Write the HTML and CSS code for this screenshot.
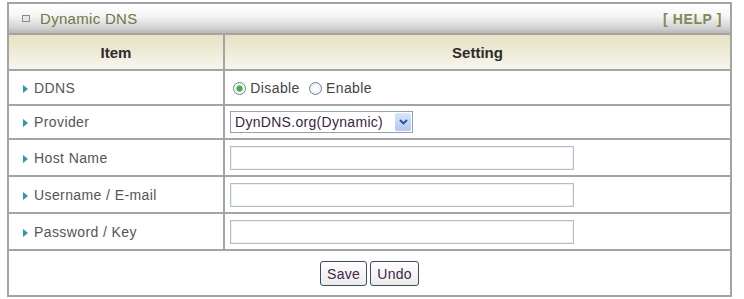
FILE: index.html
```html
<!DOCTYPE html>
<html lang="en">
<head>
    <meta charset="UTF-8">
    <title>Dynamic DNS</title>
    <link rel="stylesheet" href="styles.css">
</head>
<body>
    <table class="panel">
        <tr>
            <td colspan="2" class="title-bar">
                <div class="title-row">
                    <span class="title"><span class="title-icon"></span>Dynamic DNS</span>
                    <span class="help">[ HELP ]</span>
                </div>
            </td>
        </tr>
        <tr class="head">
            <th class="col-item">Item</th>
            <th>Setting</th>
        </tr>
        <tr class="row-ddns">
            <td class="label"><span class="bullet"></span>DDNS</td>
            <td class="value">
                <label class="radio"><input type="radio" name="ddns" checked> Disable</label>
                <label class="radio"><input type="radio" name="ddns"> Enable</label>
            </td>
        </tr>
        <tr class="row-provider">
            <td class="label"><span class="bullet"></span>Provider</td>
            <td class="value">
                <span class="select-wrap">
                    <select class="select">
                        <option>DynDNS.org(Dynamic)</option>
                        <option>DynDNS.org(Custom)</option>
                        <option>TZO.com</option>
                    </select>
                    <span class="select-arrow">
                        <svg width="9" height="6" viewBox="0 0 9 6"><path d="M1 1 L4.5 4.5 L8 1" fill="none" stroke="#2a4fa0" stroke-width="1.8"/></svg>
                    </span>
                </span>
            </td>
        </tr>
        <tr class="row-field">
            <td class="label"><span class="bullet"></span>Host Name</td>
            <td class="value"><input type="text" class="text-input"></td>
        </tr>
        <tr class="row-field">
            <td class="label"><span class="bullet"></span>Username / E-mail</td>
            <td class="value"><input type="text" class="text-input"></td>
        </tr>
        <tr class="row-field">
            <td class="label"><span class="bullet"></span>Password / Key</td>
            <td class="value"><input type="password" class="text-input"></td>
        </tr>
        <tr class="row-buttons">
            <td colspan="2">
                <div class="buttons">
                    <button class="btn">Save</button>
                    <button class="btn">Undo</button>
                </div>
            </td>
        </tr>
    </table>
</body>
</html>
```

FILE: styles.css
```css
body {
    margin: 0;
    padding: 2px 0 0 7px;
    background: #ffffff;
    font-family: "Liberation Sans", Arial, sans-serif;
    font-size: 14px;
}
.panel {
    width: 725px;
    border-collapse: collapse;
    border: 2px solid #a4a4a4;
}
.panel td,
.panel th {
    border: 2px solid #a4a4a4;
    padding: 0;
}
.title-bar {
    height: 29px;
    background: linear-gradient(#ffffff 0%, #f6f6f6 40%, #d4d4d4 80%, #b8b8b8 100%);
}
.title-row {
    display: flex;
    justify-content: space-between;
    align-items: center;
    padding: 0 8px 0 13px;
    color: #6d7a40;
    font-size: 15px;
    letter-spacing: 0.3px;
}
.title {
    display: flex;
    align-items: center;
}
.title-icon {
    display: inline-block;
    width: 6px;
    height: 5px;
    border: 1px solid #8c8c8c;
    background: #e4e4e4;
    margin-right: 10px;
}
.help {
    color: #7e8b56;
    font-size: 14px;
    font-weight: bold;
    letter-spacing: 0.6px;
}
.head th {
    height: 34px;
    background: linear-gradient(#e6e2c4 0%, #eeebd6 50%, #f7f6ee 100%);
    color: #2c2c2c;
    font-size: 15px;
    font-weight: bold;
    text-align: center;
}
.col-item {
    width: 214px;
}
.label {
    color: #555555;
    letter-spacing: 0.4px;
    padding-left: 14px !important;
}
.bullet {
    display: inline-block;
    width: 0;
    height: 0;
    border-top: 4px solid transparent;
    border-bottom: 4px solid transparent;
    border-left: 5px solid #2e9aa2;
    margin-right: 6px;
    vertical-align: 0;
}
.value {
    padding-left: 5px !important;
}
.row-ddns td {
    height: 33px;
}
.row-provider td {
    height: 32px;
}
.row-field td {
    height: 35px;
}
.row-buttons td {
    height: 44px;
}
.radio {
    color: #444444;
    font-size: 14px;
    letter-spacing: 0.4px;
    margin-right: 2px;
}
.radio input {
    appearance: none;
    width: 13px;
    height: 13px;
    margin: 0 0 0 3px;
    border: 1px solid #6c7f9a;
    border-radius: 50%;
    background: radial-gradient(#ffffff, #e6e9ee);
    vertical-align: -2px;
}
.radio input:checked {
    background: radial-gradient(#3cb040 0, #46b04a 2.6px, #d8ecd6 3.4px, #ffffff 5px);
}
.select-wrap {
    position: relative;
    display: inline-block;
    vertical-align: middle;
}
.select {
    appearance: none;
    width: 183px;
    height: 22px;
    border: 1px solid #8da2bc;
    background: #ffffff;
    color: #3a1f3f;
    font-family: "Liberation Sans", Arial, sans-serif;
    font-size: 14px;
    letter-spacing: 0.3px;
    padding: 0 0 0 4px;
    border-radius: 0;
}
.select-arrow {
    position: absolute;
    top: 2px;
    right: 2px;
    width: 16px;
    height: 18px;
    display: flex;
    align-items: center;
    justify-content: center;
    background: linear-gradient(#d8e4fb, #b4c8f0);
    border-radius: 2px;
    pointer-events: none;
}
.text-input {
    width: 344px;
    height: 24px;
    box-sizing: border-box;
    border: 1px solid #b2bccb;
    box-shadow: inset 0 0 0 1px #eef2f7;
    vertical-align: middle;
}
.buttons {
    display: flex;
    justify-content: center;
    gap: 3px;
    padding-top: 1px;
}
.btn {
    height: 25px;
    padding: 0 6px;
    border: 1px solid #38506c;
    border-radius: 3px;
    background: linear-gradient(#ffffff, #ecebe6);
    color: #3d2650;
    font-family: "Liberation Sans", Arial, sans-serif;
    font-size: 14px;
    letter-spacing: 0.3px;
    cursor: pointer;
}
```
